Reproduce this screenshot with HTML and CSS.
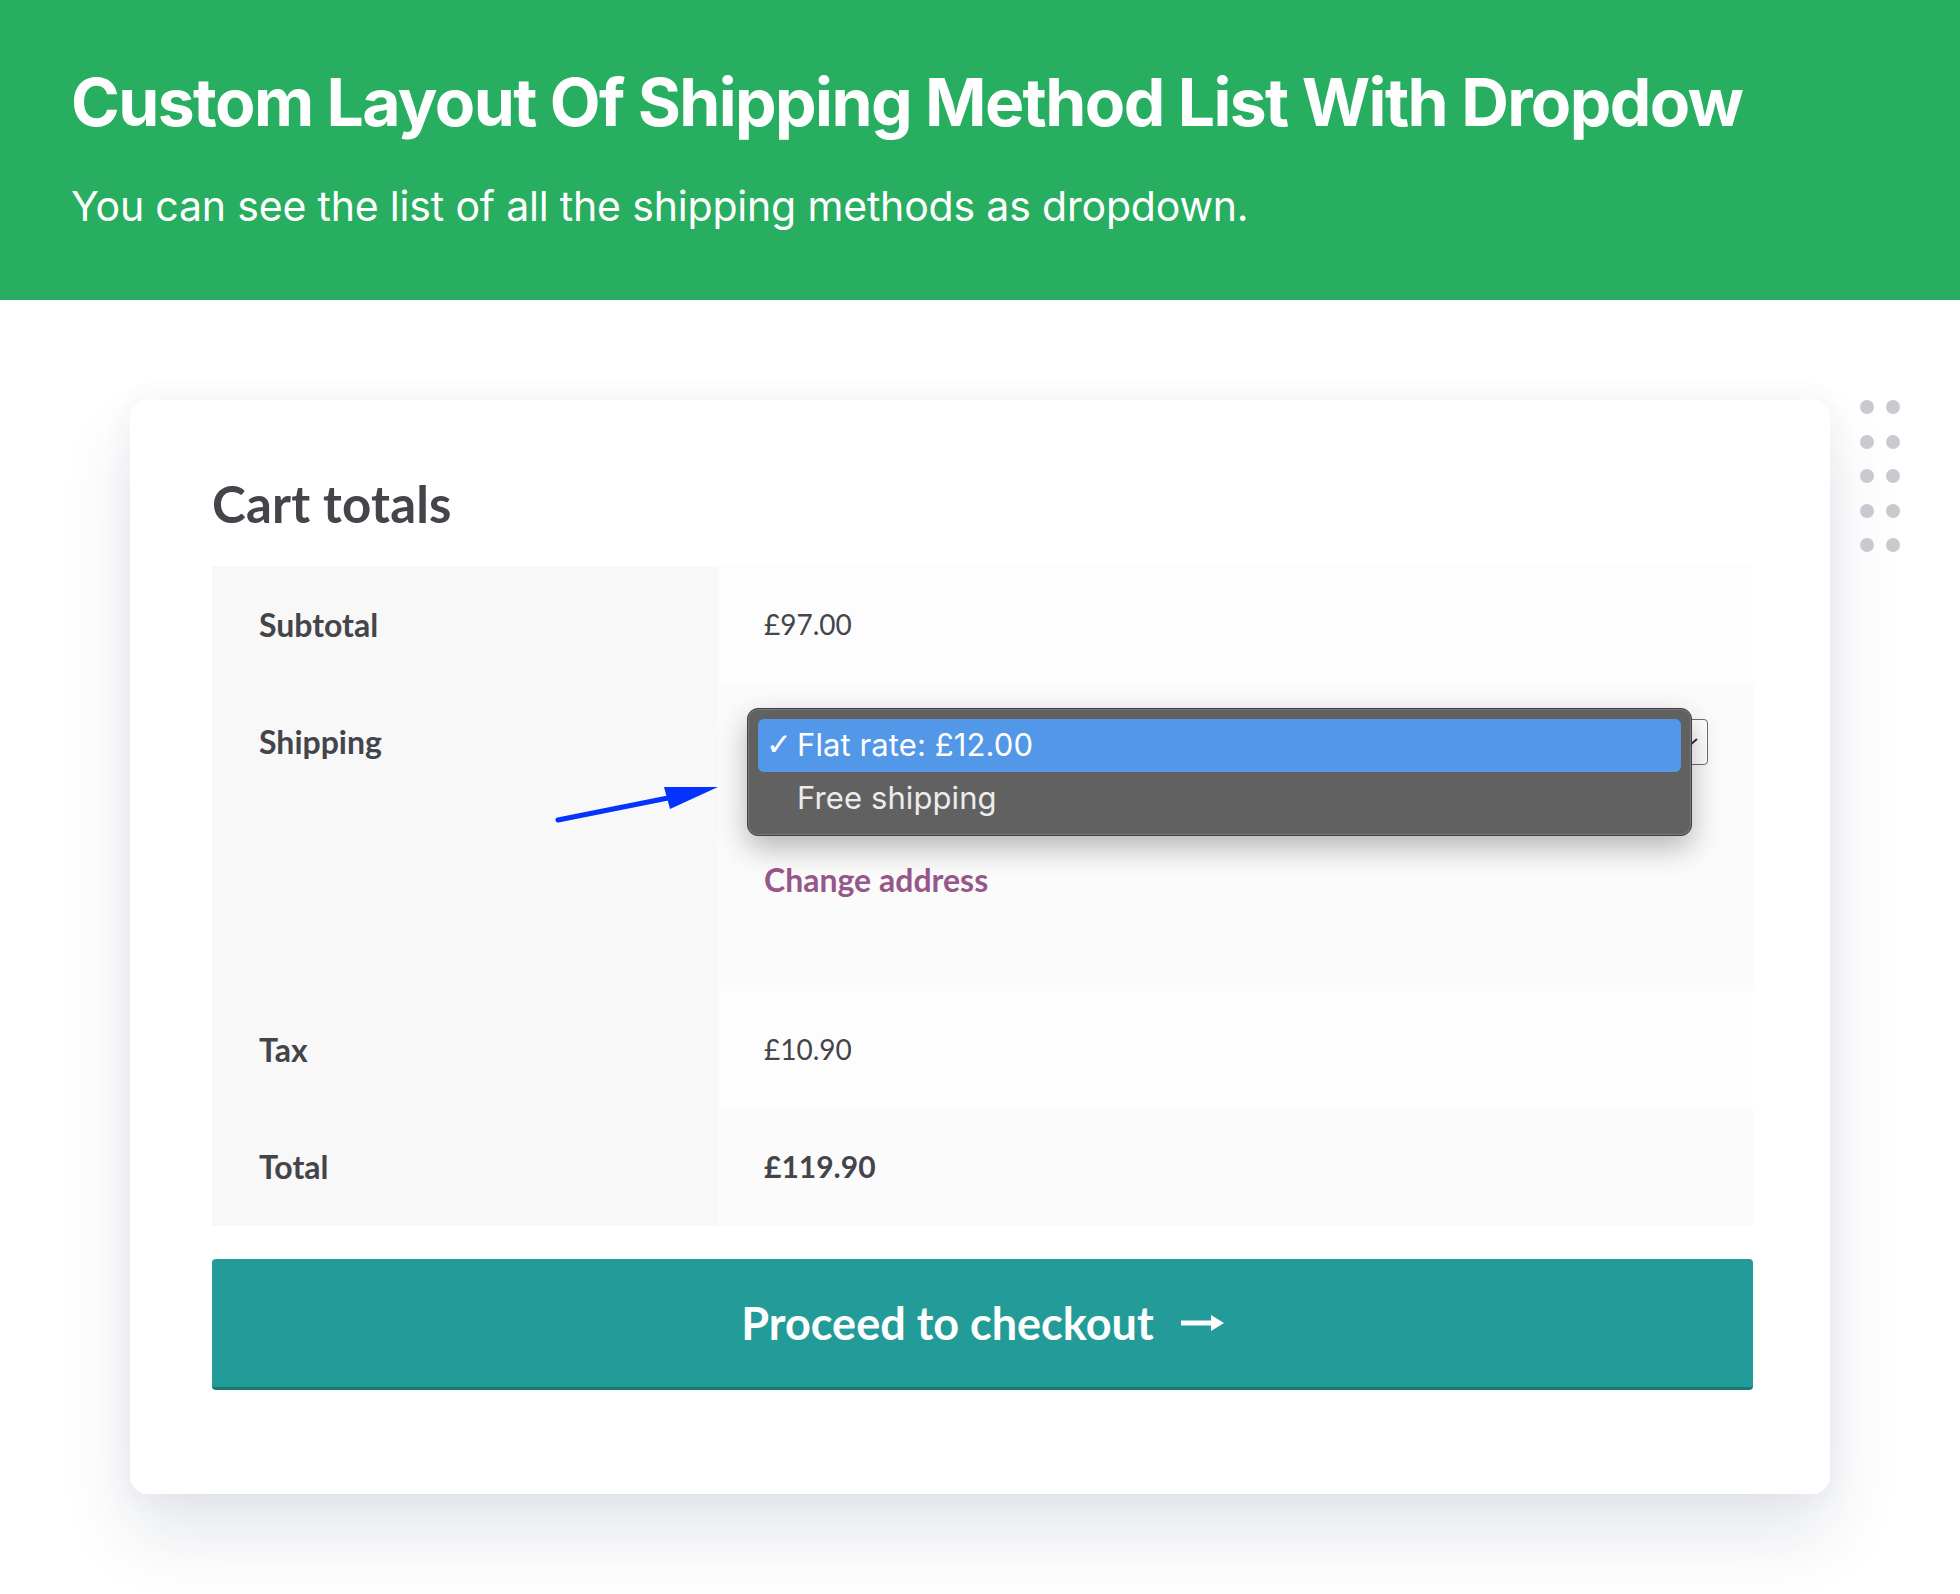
FILE: index.html
```html
<!DOCTYPE html>
<html lang="en">
<head>
<meta charset="utf-8">
<title>Custom Layout Of Shipping Method List With Dropdow</title>
<link rel="stylesheet" href="styles.css">
</head>
<body>
<header class="hero">
  <h1 class="hero-title">Custom Layout Of Shipping Method List With Dropdow</h1>
  <p class="hero-sub">You can see the list of all the shipping methods as dropdown.</p>
</header>
<main class="stage">
  <section class="card">
    <div class="dots">
      <span></span><span></span><span></span><span></span><span></span>
      <span></span><span></span><span></span><span></span><span></span>
    </div>
    <h2 class="card-title">Cart totals</h2>
    <table class="totals">
      <tr>
        <th>Subtotal</th>
        <td>£97.00</td>
      </tr>
      <tr>
        <th class="ship-label">Shipping
          <svg class="pointer" width="175" height="45" viewBox="0 0 175 45">
            <line x1="8" y1="39" x2="118" y2="17" stroke="#0433ff" stroke-width="5" stroke-linecap="round"/>
            <polygon points="168,6 114,6 120,28" fill="#0433ff"/>
          </svg>
        </th>
        <td>
          <div class="select-wrap">
            <div class="select">
              <svg class="chev" width="20" height="12" viewBox="0 0 20 12"><path d="M2 3 L10 10 L18 3" fill="none" stroke="#333" stroke-width="2"/></svg>
            </div>
            <div class="popup">
              <div class="opt opt-active"><span class="check">✓</span>Flat rate: £12.00</div>
              <div class="opt">Free shipping</div>
            </div>
          </div>
          <a class="change" href="#">Change address</a>
        </td>
      </tr>
      <tr>
        <th>Tax</th>
        <td>£10.90</td>
      </tr>
      <tr>
        <th>Total</th>
        <td><strong class="grand">£119.90</strong></td>
      </tr>
    </table>
    <a class="checkout" href="#">Proceed to checkout
      <svg class="go" width="44" height="20" viewBox="0 0 44 20"><line x1="1" y1="10" x2="34" y2="10" stroke="#fff" stroke-width="5"/><polygon points="44,10 31,2 31,18" fill="#fff"/></svg>
    </a>
  </section>
</main>
</body>
</html>
```
FILE: styles.css
```css
* { box-sizing: border-box; }
html, body { margin: 0; padding: 0; background: #fff; }
body {
  font-family: Lato, "Noto Sans", sans-serif;
  color: #43454b;
  width: 1960px;
  height: 1594px;
  overflow: hidden;
}
.hero {
  background: #27ae60;
  height: 300px;
  padding: 62px 0 0 71px;
  color: #fff;
  font-family: Inter, "Noto Sans", sans-serif;
}
.hero-title {
  margin: 0;
  font-size: 66px;
  line-height: 80px;
  font-weight: 700;
  letter-spacing: -1.6px;
}
.hero-sub {
  margin: 39px 0 0;
  font-size: 41px;
  line-height: 50px;
  font-weight: 400;
  letter-spacing: -0.18px;
}
.stage { padding: 100px 0 0 130px; }
.card {
  position: relative;
  width: 1700px;
  height: 1094px;
  background: #fff;
  border-radius: 18px;
  padding: 75px 77px 0 82px;
  box-shadow: 0 40px 70px rgba(30, 50, 90, 0.12), 0 0 30px rgba(30, 50, 90, 0.05);
}
.dots {
  position: absolute;
  top: 0;
  right: -70px;
  display: grid;
  grid-template-columns: 14px 14px;
  column-gap: 12px;
  row-gap: 20.5px;
}
.dots span {
  width: 14px;
  height: 14px;
  border-radius: 50%;
  background: #c9cacf;
}
.card-title {
  margin: 0 0 33px;
  font-size: 51px;
  line-height: 58px;
  font-weight: 700;
  letter-spacing: 0.2px;
  color: #43454b;
}
.totals {
  width: 100%;
  border-collapse: collapse;
  border-spacing: 0;
}
.totals th {
  width: 506px;
  text-align: left;
  background: #f8f8f8;
  padding: 36px 47px;
  font-size: 32px;
  line-height: 45px;
  font-weight: 700;
  vertical-align: top;
}
.totals td {
  background: #fdfdfd;
  padding: 36px 45px 36px 46px;
  font-size: 28px;
  line-height: 45px;
  vertical-align: top;
}
.totals tr:nth-child(2n) td { background: #fbfbfb; }
.ship-label { position: relative; }
.pointer {
  position: absolute;
  left: 338px;
  top: 98px;
}
.grand { font-size: 30px; font-weight: 700; }
.select-wrap { position: relative; }
.select {
  height: 46px;
  border: 1.5px solid #6e6e6e;
  border-radius: 4px;
  background: #fff;
  display: flex;
  align-items: center;
  justify-content: flex-end;
  padding-right: 8px;
}
.popup {
  position: absolute;
  left: -17px;
  top: -11px;
  width: 945px;
  padding: 10px;
  background: #616161;
  border: 1.5px solid #3f3f3f;
  border-radius: 11px;
  box-shadow: 0 12px 30px rgba(0, 0, 0, 0.28), inset 0 0 0 1px #7a7a7a;
  font-family: Inter, "Noto Sans", sans-serif;
  font-size: 31px;
  letter-spacing: 0.1px;
}
.opt {
  height: 53px;
  display: flex;
  align-items: center;
  padding-left: 39px;
  padding-bottom: 3px;
  color: #ececec;
  border-radius: 6px;
}
.opt-active {
  background: #5397e8;
  color: #fff;
  padding-left: 8px;
}
.check {
  font-family: "DejaVu Sans", sans-serif;
  font-size: 31px;
  font-weight: 700;
  width: 31px;
}
.change {
  display: block;
  margin: 92px 0 53px;
  color: #96588a;
  font-weight: 700;
  font-size: 32px;
  text-decoration: none;
}
.checkout {
  margin-top: 33px;
  height: 131px;
  display: flex;
  align-items: center;
  justify-content: center;
  gap: 26px;
  background: #239b99;
  border-bottom: 3px solid #1b7674;
  border-radius: 4px;
  color: #fff;
  font-size: 45px;
  font-weight: 700;
  text-decoration: none;
}
```
